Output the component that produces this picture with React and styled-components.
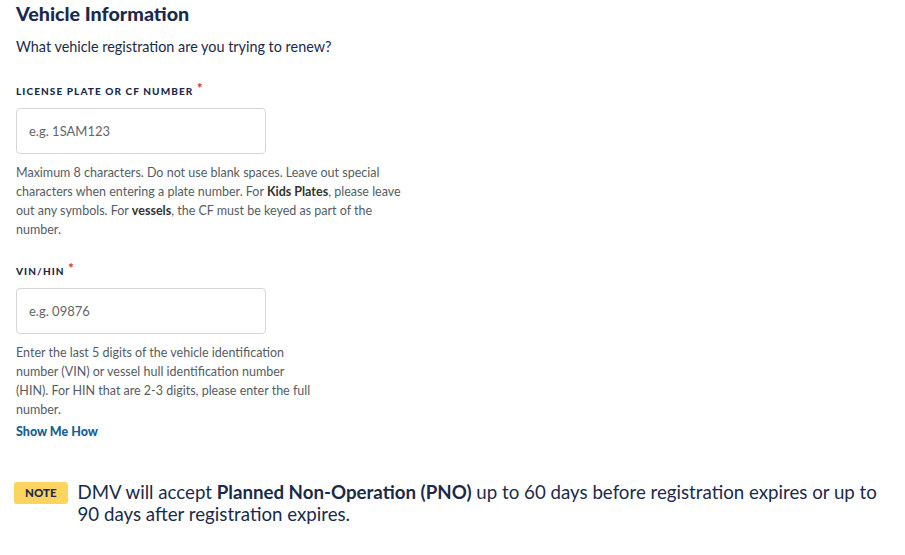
import styled, { createGlobalStyle } from 'styled-components';

const GlobalStyle = createGlobalStyle`
	body {
		margin: 0;
		background: #ffffff;
		font-family: Lato, 'Noto Sans', sans-serif;
		color: #1b2a4a;
	}
`;

function App() {
	return (
		<Page>
			<GlobalStyle />
			<Title>Vehicle Information</Title>
			<Intro>What vehicle registration are you trying to renew?</Intro>

			<Field>
				<Label>
					License Plate or CF Number <Required>*</Required>
				</Label>
				<Input placeholder='e.g. 1SAM123' />
				<Help $width={395}>
					Maximum 8 characters. Do not use blank spaces. Leave out special
					characters when entering a plate number. For <b>Kids Plates</b>, please
					leave out any symbols. For <b>vessels</b>, the CF must be keyed as part
					of the number.
				</Help>
			</Field>

			<Field $gap={24}>
				<Label>
					VIN/HIN <Required>*</Required>
				</Label>
				<Input placeholder='e.g. 09876' />
				<Help $width={300}>
					Enter the last 5 digits of the vehicle identification number (VIN) or
					vessel hull identification number (HIN). For HIN that are 2-3 digits,
					please enter the full number.
				</Help>
				<HelpLink href='#'>Show Me How</HelpLink>
			</Field>

			<Note>
				<NoteBadge>NOTE</NoteBadge>
				<NoteText>
					DMV will accept <b>Planned Non-Operation (PNO)</b> up to 60 days before
					registration expires or up to 90 days after registration expires.
				</NoteText>
			</Note>
		</Page>
	);
}

export default App;

const Page = styled.div`
	padding: 3px 16px 0 16px;
	display: flex;
	flex-direction: column;
`;
const Title = styled.h2`
	margin: 0;
	font-size: 19.7px;
	font-weight: 900;
	line-height: 22px;
	color: #1b2a4a;
`;
const Intro = styled.p`
	margin: 13px 0 0 0;
	font-size: 14.4px;
	line-height: 18px;
	color: #1b2a4a;
`;
const Field = styled.div`
	display: flex;
	flex-direction: column;
	margin-top: ${(p) => p.$gap ?? 27}px;
`;
const Label = styled.label`
	font-size: 10px;
	font-weight: 900;
	letter-spacing: 1.1px;
	text-transform: uppercase;
	line-height: 14px;
	color: #1b2a4a;
`;
const Required = styled.span`
	color: #d2401e;
	font-size: 13px;
	position: relative;
	top: -2px;
	letter-spacing: 0;
`;
const Input = styled.input`
	box-sizing: border-box;
	margin-top: 10px;
	width: 250px;
	height: 46px;
	padding: 0 12px;
	border: 1px solid #d6d6d6;
	border-radius: 4px;
	font-family: inherit;
	font-size: 13px;
	color: #333;
	&::placeholder {
		color: #666;
	}
`;
const Help = styled.p`
	margin: 9px 0 0 0;
	max-width: ${(p) => p.$width}px;
	font-size: 12.5px;
	line-height: 19px;
	color: #555c66;
	b {
		color: #333;
		font-weight: 700;
	}
`;
const HelpLink = styled.a`
	margin-top: 5px;
	align-self: flex-start;
	font-size: 12.5px;
	font-weight: 900;
	line-height: 16px;
	color: #1a5e8f;
	text-decoration: none;
`;
const Note = styled.div`
	display: flex;
	align-items: flex-start;
	gap: 10px;
	margin-top: 41px;
	margin-left: -2px;
`;
const NoteBadge = styled.span`
	flex: none;
	background: #fdd45e;
	border-radius: 3px;
	padding: 4px 11px;
	font-size: 11.5px;
	font-weight: 900;
	line-height: 14px;
	color: #1b2a4a;
	margin-top: 1px;
`;
const NoteText = styled.p`
	margin: 0;
	font-size: 18.7px;
	line-height: 22px;
	color: #1b2a4a;
	b {
		font-weight: 700;
	}
`;
